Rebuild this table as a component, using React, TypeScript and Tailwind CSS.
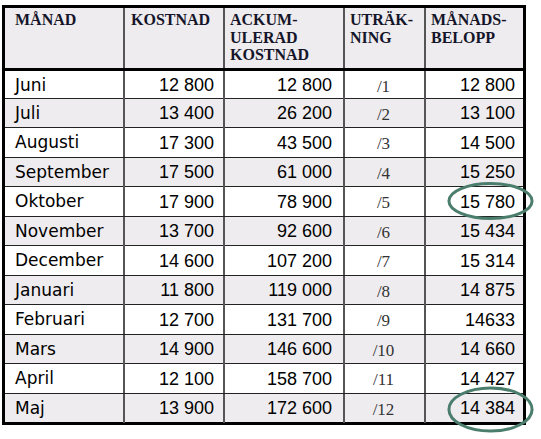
const rows = [
  { m: "Juni", k: "12 800", a: "12 800", u: "/1", b: "12 800" },
  { m: "Juli", k: "13 400", a: "26 200", u: "/2", b: "13 100" },
  { m: "Augusti", k: "17 300", a: "43 500", u: "/3", b: "14 500" },
  { m: "September", k: "17 500", a: "61 000", u: "/4", b: "15 250" },
  { m: "Oktober", k: "17 900", a: "78 900", u: "/5", b: "15 780" },
  { m: "November", k: "13 700", a: "92 600", u: "/6", b: "15 434" },
  { m: "December", k: "14 600", a: "107 200", u: "/7", b: "15 314" },
  { m: "Januari", k: "11 800", a: "119 000", u: "/8", b: "14 875" },
  { m: "Februari", k: "12 700", a: "131 700", u: "/9", b: "14633" },
  { m: "Mars", k: "14 900", a: "146 600", u: "/10", b: "14 660" },
  { m: "April", k: "12 100", a: "158 700", u: "/11", b: "14 427" },
  { m: "Maj", k: "13 900", a: "172 600", u: "/12", b: "14 384" },
]

const cols = "grid grid-cols-[120px_100px_120px_81px_97px]"
const line = "border-r-2 border-[#555]"
const serif = "font-['Liberation_Serif',serif]"
const month = "font-['DejaVu_Sans',sans-serif] text-[17px]"
const num = "font-['Liberation_Sans',sans-serif] text-[18px]"

function Oval({ className }: { className: string }) {
  return (
    <svg className={`pointer-events-none absolute ${className}`} viewBox="0 0 90 50" preserveAspectRatio="none">
      <ellipse cx="45" cy="25" rx="43" ry="23" fill="none" stroke="#4b7d6c" strokeWidth="3" vectorEffect="non-scaling-stroke" />
    </svg>
  )
}

export default function App() {
  return (
    <div className="relative h-[439px] w-[541px] bg-white pl-[2px] pt-[5px] text-black">
      <div className="w-[524px] border-[3px] border-black">
        {/* header */}
        <div className={`${cols} h-[63px] border-b-[3px] border-black bg-[#efecef] ${serif} text-[16px] font-bold leading-[17.5px] text-[#15152a]`}>
          <div className={`${line} pl-[10px] pt-[3px]`}>MÅNAD</div>
          <div className={`${line} pl-[6px] pt-[3px]`}>KOSTNAD</div>
          <div className={`${line} pl-[5px] pt-[3px]`}>
            ACKUM-
            <br />
            ULERAD
            <br />
            KOSTNAD
          </div>
          <div className={`${line} pl-[5px] pt-[3px]`}>
            UTRÄK-
            <br />
            NING
          </div>
          <div className="pl-[5px] pt-[3px]">
            MÅNADS-
            <br />
            BELOPP
          </div>
        </div>

        {rows.map((r, i) => (
          <div
            key={r.m}
            className={`${cols} ${i === 0 ? "h-[27px]" : i % 2 ? "h-[29px] border-t border-[#222]" : "h-[30px] border-t border-[#222]"} ${i % 2 ? "bg-[#efecef]" : "bg-white"}`}
          >
            <div className={`${line} flex items-center pl-[10px] pt-[1px] ${month}`}>{r.m}</div>
            <div className={`${line} flex items-center justify-end pr-[9px] pt-[1px] ${num}`}>{r.k}</div>
            <div className={`${line} flex items-center justify-end pr-[11px] pt-[1px] ${num}`}>{r.a}</div>
            <div className={`${line} flex items-center justify-center pt-[3px] pr-[2px] ${serif} text-[17px] text-[#333]`}>{r.u}</div>
            <div className={`flex items-center justify-end pr-[8px] pt-[1px] ${num}`}>{r.b}</div>
          </div>
        ))}
      </div>

      <Oval className="left-[447px] top-[182px] h-[38px] w-[87px]" />
      <Oval className="left-[447px] top-[386px] h-[47px] w-[87px]" />
    </div>
  )
}
